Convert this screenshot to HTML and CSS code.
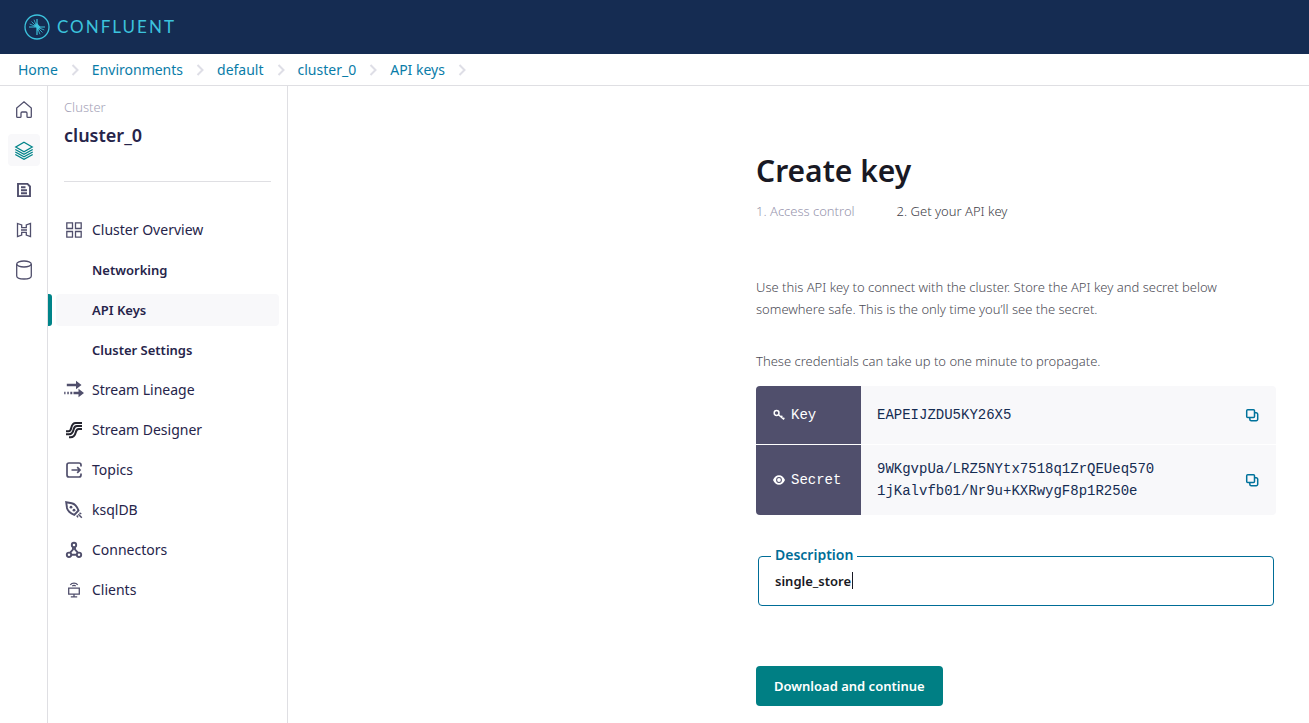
FILE: index.html
```html
<!DOCTYPE html>
<html lang="en">
<head>
<meta charset="utf-8">
<title>Create key</title>
<meta name="viewport" content="width=device-width, initial-scale=1">
<link rel="stylesheet" href="styles.css">
</head>
<body>
<svg class="defs" width="0" height="0" aria-hidden="true">
  <symbol id="chevron" viewBox="0 0 8 12"><path d="M1.500 1l5 5-5 5" fill="none" stroke="currentColor" stroke-width="2"/></symbol>
  <symbol id="copy" viewBox="0 0 14 14"><path d="M10 4.800h1.200a1.500 1.500 0 0 1 1.500 1.500v4.900a1.500 1.500 0 0 1-1.500 1.500H6.300a1.500 1.500 0 0 1-1.500-1.500V10" fill="none" stroke="currentColor" stroke-width="1.500"/><rect x="1.700" y="1.700" width="7.800" height="7.800" rx="1" fill="none" stroke="currentColor" stroke-width="1.500"/></symbol>
</svg>
<header class="topbar">
  <a class="logo" href="#" aria-label="Confluent">
    <svg class="logo-mark" viewBox="0 0 26 26" fill="none" stroke="currentColor" aria-hidden="true">
      <circle cx="13" cy="13" r="12" stroke-width="1.300"/>
      <path d="M5 13h8V5M13 21v-8h8" stroke-width="1.200"/>
      <path d="M13 13L5.700 10M13 13L7.500 7.500M13 13L10 5.700M13 13l7.300 3M13 13l5.500 5.500M13 13l3 7.300" stroke-width=".8"/>
      <path d="M13 13l-3.500-.8L13 9l3.500 4.200L13 17z" fill="currentColor" stroke="none"/>
    </svg>
    <span class="wordmark">CONFLUENT</span>
  </a>
</header>
<nav class="crumbs" aria-label="Breadcrumb">
  <a href="#">Home</a><svg><use href="#chevron"/></svg>
  <a href="#">Environments</a><svg><use href="#chevron"/></svg>
  <a href="#">default</a><svg><use href="#chevron"/></svg>
  <a href="#">cluster_0</a><svg><use href="#chevron"/></svg>
  <a href="#">API keys</a><svg><use href="#chevron"/></svg>
</nav>
<div class="layout">
  <nav class="rail" aria-label="Main">
    <a href="#" aria-label="Home"><svg viewBox="0 0 20 20"><path d="M2.700 16.500V8L10 1.800 17.300 8v8.500q0 .9-.9.900h-2.500q-.9 0-.9-.9v-3.300q0-1.200-1.200-1.200H8.200q-1.200 0-1.200 1.200v3.300q0 .9-.9.900H3.600q-.9 0-.9-.9z"/></svg></a>
    <a href="#" class="active" aria-label="Environments"><svg viewBox="0 0 20 20"><path d="M10 2.200L18.200 7 10 11.800 1.800 7zM1.300 9.500L10 14.300l8.700-4.800M1.300 12L10 16.800l8.700-4.800M1.300 14.500L10 19.300l8.700-4.800"/></svg></a>
    <a href="#" aria-label="Schemas"><svg viewBox="0 0 20 20" class="heavy"><path d="M4 3.900h9.500L16 6.500v9.600H4zM7 7.200h4.500M7 10.200h6M7 13.200h6"/></svg></a>
    <a href="#" aria-label="Stream share"><svg viewBox="0 0 20 20"><path d="M3.500 3.500L7.700 5v2.700h4.600V5l4.200-1.500v13L12.300 15v-2.700H7.700V15l-4.200 1.500zM7 10h6"/></svg></a>
    <a href="#" aria-label="Storage"><svg viewBox="0 0 20 20"><ellipse cx="10" cy="4" rx="7.300" ry="3"/><path d="M2.700 4v12c0 1.600 3 3 7.300 3s7.300-1.400 7.300-3V4"/></svg></a>
  </nav>
  <aside class="sidebar">
    <div class="cluster">
      <p>Cluster</p>
      <h2>cluster_0</h2>
    </div>
    <nav class="menu" aria-label="Cluster">
      <a href="#"><svg viewBox="0 0 20 20"><path d="M2.800 2.800h5.700v5.700H2.800zM11.500 2.800h5.700v5.700h-5.700zM2.800 11.500h5.700v5.700H2.800zM11.500 11.500h5.700v5.700h-5.700z"/></svg>Cluster Overview</a>
      <a href="#" class="sub">Networking</a>
      <a href="#" class="sub current" aria-current="page">API Keys</a>
      <a href="#" class="sub">Cluster Settings</a>
      <a href="#"><svg viewBox="0 0 20 20"><g stroke-width="2.600"><path d="M2.800 5h10M9.500 13h6M6.300 13h2M3.300 13h1.500M.2 13h1.300"/></g><path fill="currentColor" stroke="none" d="M12 .8L17.500 5 12 9.200zM14.500 8.800L20 13l-5.500 4.200z"/></svg>Stream Lineage</a>
      <a href="#" class="dark"><svg viewBox="0 0 20 20"><path stroke-width="2" d="M2 11.200h2.400c2 0 2.400-1.200 2.900-3.500.6-3 1.700-4.800 4.500-4.800H18M2 14.200h3c3.500 0 4.100-2.200 4.700-5 .5-2.200 1.100-3.300 3.200-3.300H18M5 17.200h1.500c3.600 0 4.600-2 5.300-5 .5-2.300 1-3.300 2.900-3.300H18"/></svg>Stream Designer</a>
      <a href="#"><svg viewBox="0 0 20 20"><path stroke-width="1.700" d="M17 6.500V5a2 2 0 0 0-2-2H5a2 2 0 0 0-2 2v10a2 2 0 0 0 2 2h10a2 2 0 0 0 2-2v-1.500M7.500 10H16M13.200 7.200L16 10l-2.800 2.800"/></svg>Topics</a>
      <a href="#"><svg viewBox="0 0 20 20"><path stroke-width="1.900" d="M2.200 2.200l5.600 1c2.800.6 5.600 4.300 6.700 7.300l-4.200 4.300C7.300 13.600 3.600 10.700 3 8z"/><path stroke-width="1.500" d="M14.300 14.300l3.500 3.500M12.800 15.500l1.200 1.800M15.500 12.800l1.800 1.200"/><circle cx="7" cy="7.200" r="1.400" fill="currentColor" stroke="none"/><circle cx="10" cy="10.200" r="1.400" fill="currentColor" stroke="none"/></svg>ksqlDB</a>
      <a href="#"><svg viewBox="0 0 20 20"><g stroke-width="1.900"><circle cx="10" cy="5" r="2.200"/><circle cx="5" cy="14.800" r="2.200"/><circle cx="15" cy="14.800" r="2.200"/><path d="M9 7.200v2.300l-3 3.300M11 7.200v2.300l3 3.300M7.200 14.800h5.600"/></g></svg>Connectors</a>
      <a href="#"><svg viewBox="0 0 20 20"><path d="M4.700 8.200h10.600v6H4.700zM10 14.200v2.300M6.800 16.900h6.400M6.300 4.800c1.800-2.300 5.600-2.300 7.400 0M8.300 6.100c.9-1 2.500-1 3.400 0"/></svg>Clients</a>
    </nav>
  </aside>
  <main class="main">
    <form class="create" onsubmit="return false">
      <h1>Create key</h1>
      <ol class="steps"><li>1. Access control</li><li class="on">2. Get your API key</li></ol>
      <p class="copytext">Use this API key to connect with the cluster. Store the API key and secret below somewhere safe. This is the only time you’ll see the secret.</p>
      <p class="copytext">These credentials can take up to one minute to propagate.</p>
      <table class="keys">
        <tr>
          <th scope="row"><span><svg viewBox="0 0 12 12"><circle cx="3.600" cy="4" r="2.400" fill="none" stroke="currentColor" stroke-width="1.500"/><path d="M5.500 5.800l5.500 4.700M8 8.200L9.300 6.800M10 10.200l1.300-1.400" fill="none" stroke="currentColor" stroke-width="1.500"/></svg>Key</span></th>
          <td>EAPEIJZDU5KY26X5</td>
          <td class="act"><button type="button" aria-label="Copy key"><svg><use href="#copy"/></svg></button></td>
        </tr>
        <tr>
          <th scope="row"><span><svg viewBox="0 0 12 12"><path fill="currentColor" fill-rule="evenodd" d="M0 6c1.300-3 3.400-4.700 6-4.700S10.700 3 12 6c-1.300 3-3.400 4.700-6 4.700S1.300 9 0 6zM6 3.100a2.900 2.900 0 1 0 0 5.800 2.900 2.900 0 0 0 0-5.800z"/><circle cx="6" cy="6" r="1.900" fill="currentColor"/></svg>Secret</span></th>
          <td>9WKgvpUa/LRZ5NYtx7518q1ZrQEUeq570<br>1jKalvfb01/Nr9u+KXRwygF8p1R250e</td>
          <td class="act"><button type="button" aria-label="Copy secret"><svg><use href="#copy"/></svg></button></td>
        </tr>
      </table>
      <div class="field">
        <label for="description">Description</label>
        <input id="description" type="text" value="single_store">
        <span class="caret"></span>
      </div>
      <button class="primary" type="submit">Download and continue</button>
    </form>
  </main>
</div>
</body>
</html>
```
FILE: styles.css
```css
* { box-sizing: border-box; }
body {
  margin: 0;
  min-height: 100vh;
  display: flex;
  flex-direction: column;
  background: #fff;
  color: #26244a;
  font: 14px/22px "Noto Sans", sans-serif;
}
a { color: inherit; text-decoration: none; }
h1, h2, p, ol { margin: 0; padding: 0; }
.defs { position: absolute; }
.topbar {
  height: 54px;
  padding: 0 24px;
  display: flex;
  align-items: center;
  background: #152c52;
}
.logo { display: flex; align-items: center; gap: 7px; color: #3cc3dd; }
.logo-mark { width: 26px; height: 26px; }
.wordmark { font: 400 17px/24px Lato, sans-serif; letter-spacing: 2px; }
.crumbs {
  height: 32px;
  padding: 0 18px;
  display: flex;
  align-items: center;
  gap: 13px;
  border-bottom: 1px solid #dfdfe3;
  color: #0a7ca8;
}
.crumbs svg { width: 8px; height: 12px; color: #dedee6; }
.layout { flex: 1; display: grid; grid-template-columns: 48px 240px 1fr; }
.rail {
  padding: 8px 7px 0 8px;
  display: flex;
  flex-direction: column;
  gap: 8px;
  border-right: 1px solid #dfdfe3;
  color: #504f6c;
}
.rail a {
  height: 32px;
  display: flex;
  align-items: center;
  justify-content: center;
  border-radius: 4px;
}
.rail .active { background: #f8f8fa; color: #008489; }
.rail svg, .menu svg {
  width: 20px;
  height: 20px;
  flex: none;
  fill: none;
  stroke: currentColor;
  stroke-width: 1.300;
}
.rail .heavy { stroke-width: 1.900; }
.sidebar { border-right: 1px solid #dfdfe3; }
.cluster { height: 96px; margin: 0 16px; padding-top: 10px; border-bottom: 1px solid #dfdfe3; }
.cluster p { color: #a5a3b8; font-weight: 300; font-size: 13px; }
.cluster h2 { margin-top: 4px; font-size: 18px; line-height: 26px; font-weight: 600; }
.menu { margin-top: 32px; display: flex; flex-direction: column; gap: 8px; }
.menu a {
  height: 32px;
  margin: 0 8px;
  padding: 0 8px;
  display: flex;
  align-items: center;
  gap: 8px;
  border-radius: 4px;
}
.menu svg { color: #504f6c; }
.menu .dark svg { color: #25252f; }
.menu .sub { padding-left: 36px; font-weight: 600; font-size: 13px; }
.menu .current { position: relative; background: #f8f8fa; }
.menu .current::before {
  content: "";
  position: absolute;
  left: -8px;
  width: 4px;
  height: 32px;
  border-radius: 0 3px 3px 0;
  background: #008489;
}
.main { padding: 64px 33px 16px; }
.create { max-width: 520px; margin-left: auto; }
.create h1 { color: #191924; font-size: 30px; line-height: 42px; font-weight: 600; }
.steps {
  margin: 8px 0 54px;
  display: flex;
  gap: 42px;
  list-style: none;
  font-size: 13px;
  font-weight: 300;
  color: #9896ae;
}
.steps .on { color: #3c3c45; }
.copytext { max-width: 480px; margin-bottom: 30px; font-size: 13px; font-weight: 300; color: #4c4c55; }
.copytext + .copytext { margin-bottom: 14px; }
.keys {
  width: 100%;
  border-collapse: collapse;
  border-radius: 4px;
  overflow: hidden;
  background: #f8f8fa;
  color: #152c52;
  font: 14px/22px "Liberation Mono", monospace;
}
.keys tr + tr { border-top: 1px solid #fff; }
.keys th { width: 105px; padding: 0 0 0 17px; background: #504f6c; color: #fff; font-weight: 400; }
.keys th span { display: flex; align-items: center; gap: 6px; }
.keys th svg { width: 12px; height: 12px; }
.keys td { height: 58px; padding: 13px 16px; }
.keys .act { width: 47px; padding: 0 16px; }
.keys button { display: flex; padding: 0; border: 0; background: none; color: #00729b; cursor: pointer; }
.keys button svg { width: 14px; height: 14px; }
.field { position: relative; margin: 41px 2px 60px; }
.field label {
  position: absolute;
  top: -12px;
  left: 13px;
  padding: 0 4px;
  background: #fff;
  color: #006d97;
  font-weight: 600;
}
.field input {
  display: block;
  width: 100%;
  height: 50px;
  padding: 0 16px;
  border: 1px solid #006d97;
  border-radius: 4px;
  outline: 0;
  background: #fff;
  color: #191924;
  caret-color: transparent;
  font: 600 13px/22px "Noto Sans", sans-serif;
}
.caret { position: absolute; top: 16px; left: 94px; width: 1px; height: 17px; background: #191924; }
.primary {
  height: 40px;
  padding: 0 18px;
  border: 0;
  border-radius: 4px;
  background: #007f84;
  color: #fff;
  font: 600 13px/22px "Noto Sans", sans-serif;
  cursor: pointer;
}
```
